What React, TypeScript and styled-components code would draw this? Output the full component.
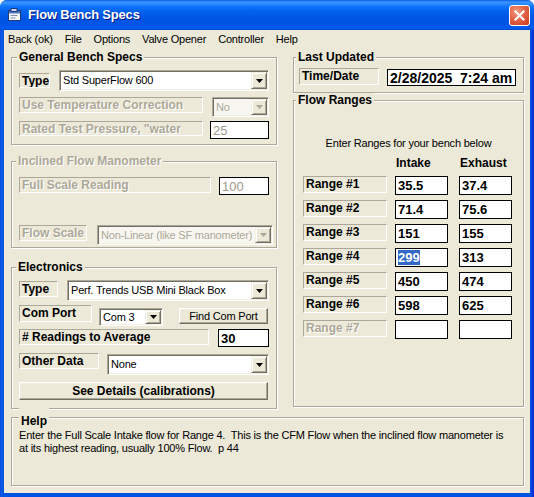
import React from "react";
import styled, { createGlobalStyle } from "styled-components";

const FONT = `"Liberation Sans", Arial, sans-serif`;

const Global = createGlobalStyle`
  html, body { margin: 0; padding: 0; background: #ffffff; }
  body { font-family: ${FONT}; }
  * { box-sizing: border-box; }
`;

const Window = styled.div`
  width: 534px;
  height: 497px;
  display: flex;
  flex-direction: column;
  background: linear-gradient(to right, #0831d9 0px, #166aee 1px, #0855dd 2px, #0054e3 3px, #0054e3 530px, #0831d9 533px);
  border-radius: 7px 7px 0 0;
  overflow: hidden;
`;

const TitleBar = styled.div`
  height: 30px;
  flex: none;
  display: flex;
  align-items: center;
  padding: 0 4px 0 7px;
  background: linear-gradient(
    to bottom,
    #0a5ee8 0%,
    #3d95ff 7%,
    #2b8aff 13%,
    #0e74fb 22%,
    #0264ef 35%,
    #0058e6 55%,
    #0054e3 72%,
    #0056e9 86%,
    #005cf2 94%,
    #0046c8 100%
  );
`;

const TitleText = styled.span`
  margin-left: 5px;
  font: bold 13px/16px ${FONT};
  color: #ffffff;
  letter-spacing: -0.2px;
  text-shadow: 1px 1px 0 #0a1883;
`;

const CloseBtn = styled.div`
  margin-left: auto;
  width: 21px;
  height: 21px;
  border: 1px solid #ffffff;
  border-radius: 3px;
  background: radial-gradient(circle at 35% 30%, #f09a7e 0%, #e3644a 45%, #c8391c 100%);
  display: flex;
  align-items: center;
  justify-content: center;
`;

const Client = styled.div`
  flex: 1;
  display: flex;
  flex-direction: column;
  margin: 0 4px 4px;
  background: #ece9d8;
`;

const MenuBar = styled.div`
  height: 18px;
  flex: none;
  display: flex;
  align-items: center;
  padding-left: 4px;
  gap: 12px;
  font: 11px/13px ${FONT};
  letter-spacing: -0.2px;
  color: #000;
`;

const Body = styled.div`
  flex: 1;
  display: flex;
  flex-direction: column;
  padding: 2px 6px 0 7px;
`;

const Columns = styled.div`
  display: grid;
  grid-template-columns: 266px 231px;
  column-gap: 16px;
  align-items: start;
`;

const Column = styled.div`
  display: flex;
  flex-direction: column;
`;

const Group = styled.fieldset<{ $h: number; $pt: number; $px: number; $lx: number; $mt?: number }>`
  height: ${(p) => p.$h}px;
  margin: ${(p) => p.$mt ?? 0}px 0 0 0;
  padding: ${(p) => p.$pt}px ${(p) => p.$px}px 0 ${(p) => p.$px}px;
  border: 1px solid #aca899;
  box-shadow: inset 1px 1px 0 #ffffff, 1px 1px 0 #ffffff;
  min-width: 0;
  display: flex;
  flex-direction: column;
  align-items: stretch;
  > legend {
    margin-left: ${(p) => p.$lx - 1 - p.$px - 2}px;
  }
`;

const Legend = styled.legend<{ $pt?: number; $off?: boolean }>`
  padding: ${(p) => p.$pt ?? 0}px 2px 0;
  font: bold 12px/14px ${FONT};
  color: ${(p) => (p.$off ? "#aca899" : "#000000")};
  text-shadow: ${(p) => (p.$off ? "1px 1px 0 #ffffff" : "none")};
  background: #ece9d8;
`;

const Row = styled.div<{ $mt?: number; $h: number; $gap: number }>`
  display: flex;
  align-items: flex-start;
  height: ${(p) => p.$h}px;
  margin-top: ${(p) => p.$mt ?? 0}px;
  gap: ${(p) => p.$gap}px;
`;

const Caption = styled.div<{ $w: number; $h?: number; $mt?: number; $off?: boolean }>`
  flex: none;
  width: ${(p) => p.$w}px;
  height: ${(p) => p.$h ?? 16}px;
  margin-top: ${(p) => p.$mt ?? 0}px;
  border: 1px solid;
  border-color: #aca899 #ffffff #ffffff #aca899;
  padding-left: 2px;
  font: bold 12px/14px ${FONT};
  color: ${(p) => (p.$off ? "#aca899" : "#000000")};
  text-shadow: ${(p) => (p.$off ? "1px 1px 0 #ffffff" : "none")};
  white-space: nowrap;
  overflow: hidden;
`;

const ComboBox = styled.div<{ $w: number; $h: number; $mt?: number; $off?: boolean }>`
  flex: none;
  width: ${(p) => p.$w}px;
  height: ${(p) => p.$h}px;
  margin-top: ${(p) => p.$mt ?? 0}px;
  display: flex;
  align-items: stretch;
  border: 1px solid;
  border-color: #aca899 #ffffff #ffffff #aca899;
  box-shadow: inset 1px 1px 0 #716f64, inset -1px -1px 0 #f1efe2;
  background: ${(p) => (p.$off ? "#f7f6f0" : "#ffffff")};
  padding: 1px;
`;

const ComboText = styled.div<{ $off?: boolean }>`
  flex: 1;
  min-width: 0;
  display: flex;
  align-items: center;
  padding-left: 2px;
  font: 11px/13px ${FONT};
  letter-spacing: -0.2px;
  color: ${(p) => (p.$off ? "#aca899" : "#000000")};
  white-space: nowrap;
  overflow: hidden;
`;

const DropBtn = styled.div`
  flex: none;
  width: 16px;
  display: flex;
  align-items: center;
  justify-content: center;
  background: #ece9d8;
  border: 1px solid;
  border-color: #f1efe2 #716f64 #716f64 #f1efe2;
  box-shadow: inset 1px 1px 0 #ffffff, inset -1px -1px 0 #aca899;
`;

const TextBox = styled.div<{ $w: number; $h: number; $mt?: number; $tone?: "bold" | "dim" | "date" }>`
  flex: none;
  width: ${(p) => p.$w}px;
  height: ${(p) => p.$h}px;
  margin-top: ${(p) => p.$mt ?? 0}px;
  border: 1px solid #000000;
  background: #ffffff;
  display: flex;
  align-items: center;
  padding-left: 2px;
  white-space: pre;
  font: ${(p) =>
    p.$tone === "date"
      ? `bold 14px/16px ${FONT}`
      : p.$tone === "dim"
      ? `13px/15px ${FONT}`
      : `bold 13px/15px ${FONT}`};
  color: ${(p) => (p.$tone === "dim" ? "#9d9a8c" : "#000000")};
`;

const Selected = styled.span`
  background: #316ac5;
  color: #ffffff;
`;

const PushButton = styled.div<{ $w: number; $h: number; $mt?: number; $ml?: number; $bold?: boolean }>`
  flex: none;
  width: ${(p) => p.$w}px;
  height: ${(p) => p.$h}px;
  margin-top: ${(p) => p.$mt ?? 0}px;
  margin-left: ${(p) => p.$ml ?? 0}px;
  display: flex;
  align-items: center;
  justify-content: center;
  background: #ece9d8;
  border: 1px solid;
  border-color: #ffffff #716f64 #716f64 #ffffff;
  box-shadow: inset -1px -1px 0 #aca899, inset 1px 1px 0 #f1efe2;
  font: ${(p) => (p.$bold ? `bold 12px/14px ${FONT}` : `11px/13px ${FONT}`)};
  letter-spacing: ${(p) => (p.$bold ? "0" : "-0.2px")};
  color: #000;
  white-space: nowrap;
`;

const Note = styled.div<{ $mt: number }>`
  margin-top: ${(p) => p.$mt}px;
  text-align: center;
  font: 11px/13px ${FONT};
  letter-spacing: -0.2px;
  color: #000;
`;

const RangeGrid = styled.div<{ $mt?: number }>`
  display: grid;
  grid-template-columns: 92px 64px 53px;
  row-gap: 5px;
  margin-top: ${(p) => p.$mt ?? 0}px;
  align-items: start;
`;

const ColHead = styled.div`
  padding-left: 1px;
  font: bold 12px/13px ${FONT};
  color: #000;
`;

const HelpText = styled.div`
  margin-top: 1px;
  font: 11px/13px ${FONT};
  letter-spacing: -0.2px;
  color: #000;
  white-space: pre;
`;

const Arrow = ({ off }: { off?: boolean }) => (
  <svg width="7" height="4" viewBox="0 0 7 4">
    <path d="M0 0H7L3.5 4Z" fill={off ? "#aca899" : "#000"} />
  </svg>
);

const Combo = ({
  w,
  h,
  mt,
  off,
  children,
}: {
  w: number;
  h: number;
  mt?: number;
  off?: boolean;
  children: React.ReactNode;
}) => (
  <ComboBox $w={w} $h={h} $mt={mt} $off={off}>
    <ComboText $off={off}>{children}</ComboText>
    <DropBtn>
      <Arrow off={off} />
    </DropBtn>
  </ComboBox>
);

const AppIcon = () => (
  <svg width="16" height="16" viewBox="0 0 16 16">
    <rect x="1.5" y="3.5" width="12" height="10" fill="#f4f6fb" stroke="#1e3b7a" />
    <rect x="2" y="4" width="11" height="2.5" fill="#4f79c2" />
    <rect x="4" y="1.5" width="6" height="3" fill="#c9d6ee" stroke="#1e3b7a" />
    <rect x="3.5" y="8" width="7" height="1" fill="#7d8fb5" />
    <rect x="3.5" y="10.5" width="5" height="1" fill="#7d8fb5" />
  </svg>
);

const CloseIcon = () => (
  <svg width="11" height="11" viewBox="0 0 11 11">
    <path d="M1.5 1.5L9.5 9.5M9.5 1.5L1.5 9.5" stroke="#ffffff" strokeWidth="2" strokeLinecap="square" />
  </svg>
);

const ranges: [string, string, string, boolean?][] = [
  ["Range #1", "35.5", "37.4"],
  ["Range #2", "71.4", "75.6"],
  ["Range #3", "151", "155"],
  ["Range #4", "299", "313", true],
  ["Range #5", "450", "474"],
  ["Range #6", "598", "625"],
  ["Range #7", "", ""],
];

export default function App() {
  return (
    <>
      <Global />
      <Window>
        <TitleBar>
          <AppIcon />
          <TitleText>Flow Bench Specs</TitleText>
          <CloseBtn>
            <CloseIcon />
          </CloseBtn>
        </TitleBar>
        <Client>
          <MenuBar>
            <span>Back (ok)</span>
            <span>File</span>
            <span>Options</span>
            <span>Valve Opener</span>
            <span>Controller</span>
            <span>Help</span>
          </MenuBar>
          <Body>
            <Columns>
              <Column>
                <Group $h={95} $pt={6} $px={7} $lx={8}>
                  <Legend>General Bench Specs</Legend>
                  <Row $h={21} $gap={9}>
                    <Caption $w={31} $h={15} $mt={3}>Type</Caption>
                    <Combo w={210} h={21}>Std SuperFlow 600</Combo>
                  </Row>
                  <Row $h={20} $gap={9} $mt={6}>
                    <Caption $w={184} $off>Use Temperature Correction</Caption>
                    <Combo w={57} h={20} off>No</Combo>
                  </Row>
                  <Row $h={18} $gap={7} $mt={4}>
                    <Caption $w={184} $h={15} $off>Rated Test Pressure, "water</Caption>
                    <TextBox $w={59} $h={18} $tone="dim">25</TextBox>
                  </Row>
                </Group>

                <Group $h={94} $pt={9} $px={7} $lx={7} $mt={9}>
                  <Legend $off>Inclined Flow Manometer</Legend>
                  <Row $h={18} $gap={8}>
                    <Caption $w={192} $off>Full Scale Reading</Caption>
                    <TextBox $w={50} $h={18} $tone="dim">100</TextBox>
                  </Row>
                  <Row $h={20} $gap={10} $mt={30}>
                    <Caption $w={68} $off>Flow Scale</Caption>
                    <Combo w={176} h={20} off>Non-Linear (like SF manometer)</Combo>
                  </Row>
                </Group>

                <Group $h={149} $pt={6} $px={7} $lx={7} $mt={12}>
                  <Legend>Electronics</Legend>
                  <Row $h={21} $gap={9}>
                    <Caption $w={39} $mt={1}>Type</Caption>
                    <Combo w={202} h={21}>Perf. Trends USB Mini Black Box</Combo>
                  </Row>
                  <Row $h={21} $gap={7} $mt={4}>
                    <Caption $w={73} $h={17}>Com Port</Caption>
                    <Combo w={64} h={18} mt={3}>Com 3</Combo>
                    <PushButton $w={89} $h={16} $mt={3} $ml={9}>
                      Find Com Port
                    </PushButton>
                  </Row>
                  <Row $h={18} $gap={9} $mt={3}>
                    <Caption $w={190}># Readings to Average</Caption>
                    <TextBox $w={51} $h={18}>30</TextBox>
                  </Row>
                  <Row $h={22} $gap={8} $mt={6}>
                    <Caption $w={80}>Other Data</Caption>
                    <Combo w={162} h={21} mt={1}>None</Combo>
                  </Row>
                  <Row $h={18} $gap={0} $mt={7}>
                    <PushButton $w={249} $h={18} $bold>
                      See Details (calibrations)
                    </PushButton>
                  </Row>
                </Group>
              </Column>

              <Column>
                <Group $h={43} $pt={4} $px={5} $lx={5}>
                  <Legend>Last Updated</Legend>
                  <Row $h={18} $gap={8}>
                    <Caption $w={80} $h={17}>Time/Date</Caption>
                    <TextBox $w={129} $h={17} $mt={1} $tone="date">{"2/28/2025  7:24 am"}</TextBox>
                  </Row>
                </Group>

                <Group $h={314} $pt={0} $px={9} $lx={5}>
                  <Legend>Flow Ranges</Legend>
                  <Note $mt={30}>Enter Ranges for your bench below</Note>
                  <RangeGrid $mt={7}>
                    <span />
                    <ColHead>Intake</ColHead>
                    <ColHead>Exhaust</ColHead>
                  </RangeGrid>
                  <RangeGrid $mt={6}>
                    {ranges.map(([name, a, b, sel]) => (
                      <React.Fragment key={name}>
                        <Caption $w={84} $h={17} $off={name === "Range #7"}>
                          {name}
                        </Caption>
                        <TextBox $w={53} $h={19}>
                          {sel ? <Selected>{a}</Selected> : a}
                        </TextBox>
                        <TextBox $w={53} $h={19}>
                          {b}
                        </TextBox>
                      </React.Fragment>
                    ))}
                  </RangeGrid>
                </Group>
              </Column>
            </Columns>

            <Group $h={80} $pt={0} $px={7} $lx={10} $mt={-3}>
              <Legend $pt={8}>Help</Legend>
              <HelpText>
                {"Enter the Full Scale Intake flow for Range 4.  This is the CFM Flow when the inclined flow manometer is\nat its highest reading, usually 100% Flow.  p 44"}
              </HelpText>
            </Group>
          </Body>
        </Client>
      </Window>
    </>
  );
}
